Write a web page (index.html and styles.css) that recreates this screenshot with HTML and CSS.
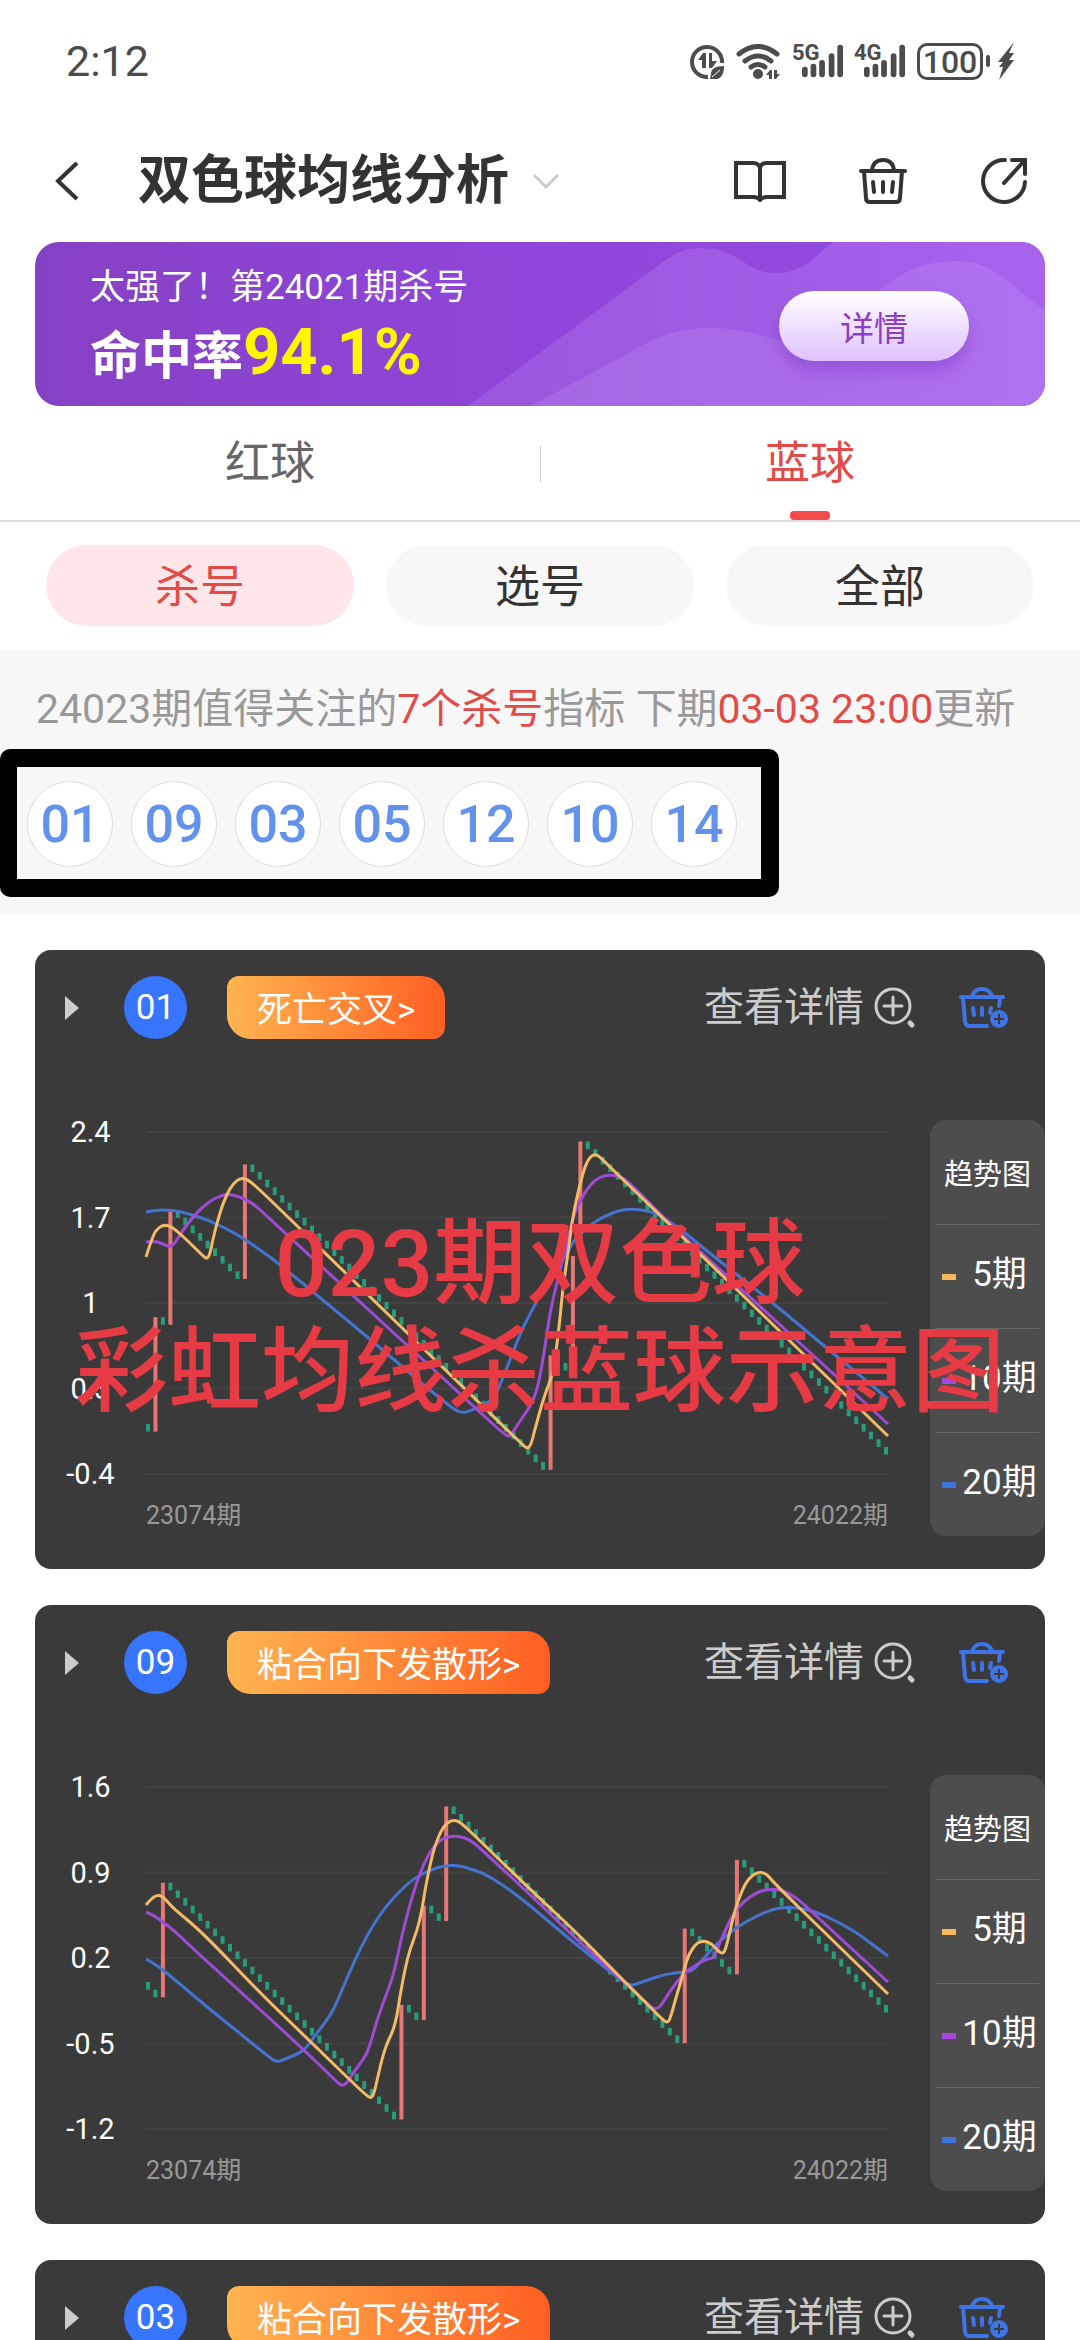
FILE: index.html
```html
<!DOCTYPE html>
<html lang="zh-CN">
<head>
  <meta charset="UTF-8" />
  <meta name="viewport" content="width=device-width, initial-scale=1.0"/>
  <title>双色球均线分析</title>
  <link rel="stylesheet" href="styles.css">
</head>
<body>

  <!-- Shared icons -->
  <svg class="sprite" aria-hidden="true">
    <symbol id="icon-basket" viewBox="0 0 50 48">
      <g fill="none" stroke="currentColor" stroke-width="4" stroke-linecap="round" stroke-linejoin="round">
        <path d="M14 13C15 6 19 3 25 3s10 3 11 10"/>
        <path d="M3 14h44"/>
        <path d="M6 14l2 27q0 4 4 4h26q4 0 4-4l2-27"/>
        <path d="M15 25l1 10M25 25v10M35 25l-1 10"/>
      </g>
    </symbol>
    <symbol id="icon-add" viewBox="0 0 50 43">
      <g fill="none" stroke="currentColor" stroke-width="4" stroke-linecap="round" stroke-linejoin="round">
        <path d="M13 10C15 5 18 3 23 3s8 2 10 7"/>
        <path d="M2 11h42"/>
        <path d="M4 11l2 25q1 4 4 4h18"/>
        <path d="M41 12l-1 8"/>
        <path d="M14 22l1 7M23 22v7M32 22l-1 5"/>
      </g>
      <circle cx="40" cy="33" r="9" fill="currentColor"/>
      <path d="M40 28v10M35 33h10" stroke="#3a3a3a" stroke-width="2"/>
    </symbol>
    <symbol id="icon-zoom" viewBox="0 0 42 42">
      <g fill="none" stroke="currentColor" stroke-width="3" stroke-linecap="round">
        <circle cx="19" cy="19" r="17"/>
        <path d="M19 10v18M10 19h18"/>
        <path d="M36 36l2 2" stroke-width="5"/>
      </g>
    </symbol>
    <symbol id="icon-signal" viewBox="0 0 44 34">
      <path d="M3 26v5M12 23v8M21 19v12M31 12v19M40 3v28" stroke="currentColor" stroke-width="6" stroke-linecap="round"/>
    </symbol>
    <symbol id="icon-play" viewBox="0 0 14 24">
      <path d="M0 0l14 12L0 24z" fill="currentColor"/>
    </symbol>
  </svg>

  <!-- Status bar -->
  <div class="status">
    <span class="time">2:12</span>
    <div class="status-icons">
      <svg width="34" height="35" viewBox="0 0 34 35">
        <path d="M18 33A15 15 0 1 1 32 19" fill="none" stroke="currentColor" stroke-width="4"/>
        <path d="M8 16l5-7h3v15h-4v-8zM19 9h3v8h5l-5 7h-3z" fill="currentColor"/>
        <path d="M34 22c-9 0-13 3-13 8l-1 5h7c5-1 7-6 7-13z" fill="currentColor"/>
        <path d="M22 33l8-7" stroke="#fff" stroke-width="1"/>
      </svg>
      <svg class="wifi" width="44" height="35" viewBox="0 0 44 35">
        <g fill="none" stroke="currentColor" stroke-width="5" stroke-linecap="round">
          <path d="M3 10q19-15 38 0"/>
          <path d="M9 17q13-10 26 0"/>
          <path d="M15 23q7-5 14 0"/>
        </g>
        <circle cx="22" cy="30" r="5" fill="currentColor"/>
        <path d="M30 31l4-5h2v9h-3v-4zM38 26h3v4h3l-4 5h-2z" fill="currentColor"/>
      </svg>
      <span class="signal"><b>5G</b><svg width="44" height="34"><use href="#icon-signal"/></svg></span>
      <span class="signal"><b>4G</b><svg width="44" height="34"><use href="#icon-signal"/></svg></span>
      <span class="battery">100</span>
      <span class="battery-tip"></span>
      <svg class="bolt" width="16" height="38" viewBox="0 0 16 38">
        <path d="M16 0L0 20h5l-4 5h4L1 38l15-20h-5l5-7h-5z" fill="currentColor"/>
      </svg>
    </div>
  </div>

  <!-- Title bar -->
  <header class="topbar">
    <button class="icon-btn" aria-label="返回">
      <svg width="24" height="40" viewBox="0 0 24 40"><path d="M22 2L3 20l19 18" fill="none" stroke="currentColor" stroke-width="4"/></svg>
    </button>
    <h1>双色球均线分析</h1>
    <button class="icon-btn more" aria-label="切换">
      <svg width="26" height="16" viewBox="0 0 26 16"><path d="M1 2l12 12L25 2" fill="none" stroke="currentColor" stroke-width="3"/></svg>
    </button>
    <div class="actions">
      <button class="icon-btn" aria-label="说明">
        <svg width="52" height="42" viewBox="0 0 52 42">
          <path d="M2 3h17q6 0 7 5q1-5 7-5h17v34H33q-5 0-7 3q-2-3-7-3H2zM26 8v31" fill="none" stroke="currentColor" stroke-width="4"/>
        </svg>
      </button>
      <button class="icon-btn" aria-label="号码篮"><svg width="50" height="48"><use href="#icon-basket"/></svg></button>
      <button class="icon-btn" aria-label="分享">
        <svg width="48" height="48" viewBox="0 0 48 48">
          <path d="M25 3A21 21 0 1 0 45 25M32 3h13v14M45 3L24 26" fill="none" stroke="currentColor" stroke-width="4" stroke-linecap="round"/>
        </svg>
      </button>
    </div>
  </header>

  <!-- Banner -->
  <section class="banner">
    <svg class="waves" viewBox="0 0 1010 164" preserveAspectRatio="none">
      <defs>
        <linearGradient id="wave-back">
          <stop offset="0" stop-color="#9a56dc"/>
          <stop offset="1" stop-color="#a763ec"/>
        </linearGradient>
        <linearGradient id="wave-front">
          <stop offset="0" stop-color="#a566e2"/>
          <stop offset="1" stop-color="#b071f0"/>
        </linearGradient>
      </defs>
      <path d="M433 164L625 22C645 8 652 6 665 6C705 6 709 31 741 31C767 31 777 17 798 0H1010V164z" fill="url(#wave-back)"/>
      <path d="M496 164L610 102C637 88 655 86 677 86C705 86 722 93 750 100C820 110 830 19 922 19C960 19 975 45 1010 68V164z" fill="url(#wave-front)"/>
    </svg>
    <div class="banner-text">
      <p>太强了！第24021期杀号</p>
      <strong>命中率<em>94.1%</em></strong>
    </div>
    <button class="detail-btn">详情</button>
  </section>

  <!-- Tabs -->
  <nav class="tabs">
    <a href="#red">红球</a>
    <a href="#blue" class="active">蓝球</a>
  </nav>

  <div class="filters">
    <button class="active">杀号</button>
    <button>选号</button>
    <button>全部</button>
  </div>

  <!-- Recommended numbers -->
  <section class="summary">
    <p>24023期值得关注的<em>7个杀号</em>指标 下期<em>03-03 23:00</em>更新</p>
    <div class="balls">
      <span>01</span>
      <span>09</span>
      <span>03</span>
      <span>05</span>
      <span>12</span>
      <span>10</span>
      <span>14</span>
    </div>
  </section>

  <main class="list">

    <article class="card">
      <div class="card-head">
        <button class="icon-btn" aria-label="展开"><svg width="14" height="24"><use href="#icon-play"/></svg></button>
        <span class="num">01</span>
        <button class="tag">死亡交叉&gt;</button>
        <a class="more-link" href="#detail-01">查看详情<svg width="42" height="42"><use href="#icon-zoom"/></svg></a>
        <button class="icon-btn add" aria-label="加入号码篮"><svg width="50" height="43"><use href="#icon-add"/></svg></button>
      </div>
      <div class="card-body">
        <div class="axis"><span>2.4</span><span>1.7</span><span>1</span><span>0.3</span><span>-0.4</span></div>
        <div class="plot">
          <svg class="chart" data-chart="01" viewBox="0 0 742 342" preserveAspectRatio="none"></svg>
          <div class="dates"><span>23074期</span><span>24022期</span></div>
        </div>
        <div class="legend">
          <div>趋势图</div>
          <div class="ma5"><span>5期</span></div>
          <div class="ma10"><span>10期</span></div>
          <div class="ma20"><span>20期</span></div>
        </div>
      </div>
      <p class="caption">023期双色球<br>彩虹均线杀蓝球示意图</p>
    </article>

    <article class="card">
      <div class="card-head">
        <button class="icon-btn" aria-label="展开"><svg width="14" height="24"><use href="#icon-play"/></svg></button>
        <span class="num">09</span>
        <button class="tag">粘合向下发散形&gt;</button>
        <a class="more-link" href="#detail-09">查看详情<svg width="42" height="42"><use href="#icon-zoom"/></svg></a>
        <button class="icon-btn add" aria-label="加入号码篮"><svg width="50" height="43"><use href="#icon-add"/></svg></button>
      </div>
      <div class="card-body">
        <div class="axis"><span>1.6</span><span>0.9</span><span>0.2</span><span>-0.5</span><span>-1.2</span></div>
        <div class="plot">
          <svg class="chart" data-chart="09" viewBox="0 0 742 342" preserveAspectRatio="none"></svg>
          <div class="dates"><span>23074期</span><span>24022期</span></div>
        </div>
        <div class="legend">
          <div>趋势图</div>
          <div class="ma5"><span>5期</span></div>
          <div class="ma10"><span>10期</span></div>
          <div class="ma20"><span>20期</span></div>
        </div>
      </div>
    </article>

    <article class="card">
      <div class="card-head">
        <button class="icon-btn" aria-label="展开"><svg width="14" height="24"><use href="#icon-play"/></svg></button>
        <span class="num">03</span>
        <button class="tag">粘合向下发散形&gt;</button>
        <a class="more-link" href="#detail-03">查看详情<svg width="42" height="42"><use href="#icon-zoom"/></svg></a>
        <button class="icon-btn add" aria-label="加入号码篮"><svg width="50" height="43"><use href="#icon-add"/></svg></button>
      </div>
    </article>

  </main>

  <script src="script.js"></script>
</body>
</html>
```

FILE: styles.css
```css
* {
  box-sizing: border-box;
}

body {
  margin: 0;
  height: 100vh;
  display: flex;
  flex-direction: column;
  overflow: hidden;
  background: #fff;
  color: #333;
  font-family: Roboto, "Noto Sans CJK SC", sans-serif;
}

h1, p {
  margin: 0;
}

button {
  font-family: inherit;
  border: none;
  padding: 0;
  background: none;
  color: inherit;
  cursor: pointer;
}

a {
  color: inherit;
  text-decoration: none;
}

em {
  font-style: normal;
}

svg {
  display: block;
}

.sprite {
  position: absolute;
  width: 0;
  height: 0;
}

.icon-btn {
  display: flex;
}

/* Status bar */
.status {
  display: flex;
  justify-content: space-between;
  align-items: center;
  height: 122px;
  padding: 0 66px;
  color: #4c4c4c;
  flex-shrink: 0;
}

.time {
  font-size: 43px;
}

.status-icons {
  display: flex;
  align-items: center;
}

.wifi {
  margin-left: 12px;
}

.signal {
  position: relative;
  padding-left: 10px;
  margin-left: 10px;
}

.wifi + .signal {
  margin-left: 12px;
}

.signal b {
  position: absolute;
  left: 0;
  top: 0;
  font-size: 22px;
  line-height: 18px;
  font-weight: 700;
}

.signal svg {
  width: 42px;
}

.battery {
  width: 66px;
  height: 37px;
  margin-left: 11px;
  border: 3px solid #4c4c4c;
  border-radius: 10px;
  font-size: 32px;
  line-height: 32px;
  font-weight: 500;
  text-align: center;
}

.battery-tip {
  width: 4px;
  height: 12px;
  margin: 0 8px 0 3px;
  border-radius: 2px;
  background: #4c4c4c;
}

/* Title bar */
.topbar {
  display: flex;
  align-items: center;
  height: 120px;
  padding: 0 52px 2px 55px;
  flex-shrink: 0;
}

.topbar h1 {
  margin-left: 59px;
  font-size: 53px;
  line-height: 70px;
  font-weight: bold;
}

.more {
  margin-left: 24px;
  color: #ccc;
}

.actions {
  display: flex;
  align-items: center;
  gap: 72px;
  margin-left: auto;
}

/* Banner */
.banner {
  position: relative;
  display: flex;
  justify-content: space-between;
  align-items: center;
  height: 164px;
  margin: 0 35px;
  padding: 0 76px 0 55px;
  border-radius: 24px;
  overflow: hidden;
  background: linear-gradient(to right, #8541c4, #9046da 50%, #944ce0);
  color: #fff;
  flex-shrink: 0;
}

.waves {
  position: absolute;
  inset: 0;
  width: 100%;
  height: 100%;
}

.banner-text {
  position: relative;
}

.banner-text p {
  font-size: 35px;
  line-height: 60px;
}

.banner-text strong {
  display: block;
  font-size: 51px;
  line-height: 68px;
}

.banner-text em {
  font-size: 65px;
  line-height: 68px;
  color: #fff600;
}

.detail-btn {
  position: relative;
  width: 190px;
  height: 70px;
  margin-top: 4px;
  border-radius: 35px;
  background: linear-gradient(#fff, #dfc2ff);
  box-shadow: 0 10px 16px rgba(110, 40, 180, 0.35);
  color: #8a3fc4;
  font-size: 34px;
}

/* Tabs */
.tabs {
  display: flex;
  height: 116px;
  border-bottom: 2px solid #ddd;
  flex-shrink: 0;
}

.tabs a {
  position: relative;
  flex: 1;
  text-align: center;
  font-size: 45px;
  line-height: 116px;
  color: #666;
}

.tabs a + a::before {
  content: "";
  position: absolute;
  left: 0;
  top: 40px;
  width: 1px;
  height: 36px;
  background: #ccc;
}

.tabs .active {
  color: #e24b48;
}

.tabs .active::after {
  content: "";
  position: absolute;
  left: calc(50% - 20px);
  bottom: 0;
  width: 40px;
  height: 9px;
  border-radius: 4px;
  background: #f54b4b;
}

.filters {
  display: flex;
  gap: 32px;
  padding: 23px 46px;
  flex-shrink: 0;
}

.filters button {
  flex: 1;
  height: 81px;
  padding-bottom: 4px;
  border-radius: 41px;
  background: #f7f7f7;
  font-size: 45px;
}

.filters .active {
  background: #ffe7e9;
  color: #e24b48;
}

/* Recommended numbers */
.summary {
  padding: 30px 0 17px;
  background: #f7f7f7;
  flex-shrink: 0;
}

.summary p {
  padding-left: 36px;
  font-size: 41px;
  line-height: 60px;
  color: #999;
  white-space: nowrap;
}

.summary em {
  color: #e24b48;
}

.balls {
  display: inline-flex;
  gap: 18px;
  margin-top: 10px;
  padding: 14px 24px 12px 10px;
  border: 18px solid #000;
  border-left-width: 17px;
  border-radius: 10px;
  vertical-align: top;
}

.balls span {
  width: 86px;
  height: 86px;
  border: 1px solid #ddd;
  border-radius: 50%;
  background: #fff;
  color: #6292ec;
  font-size: 52px;
  line-height: 86px;
  font-weight: 500;
  text-align: center;
}

/* Chart cards */
.list {
  flex: 1;
  min-height: 0;
  padding: 36px 35px;
  overflow: hidden;
}

.card {
  position: relative;
  min-height: 618px;
  margin-bottom: 36px;
  padding-bottom: 33px;
  border-radius: 16px;
  background: #3a3a3a;
  color: #fff;
}

.card-head {
  display: flex;
  align-items: center;
  padding: 26px 36px 0 30px;
  color: #ccc;
}

.num {
  width: 63px;
  height: 63px;
  margin-left: 45px;
  border-radius: 50%;
  background: #3875ff;
  color: #fff;
  font-size: 35px;
  line-height: 63px;
  text-align: center;
}

.tag {
  height: 63px;
  margin-left: 40px;
  padding: 0 30px 2px;
  border-radius: 12px 24px 12px 24px;
  background: linear-gradient(to right, #ffb450, #ff5f22);
  color: #fff;
  font-size: 35px;
}

.more-link {
  display: flex;
  align-items: center;
  gap: 10px;
  margin-left: auto;
  font-size: 40px;
  line-height: 63px;
}

.add {
  margin-left: 43px;
  color: #3f74e6;
}

.card-body {
  display: flex;
  align-items: flex-start;
  margin-top: 79px;
}

.axis {
  display: flex;
  flex-direction: column;
  justify-content: space-between;
  align-items: center;
  width: 111px;
  height: 370px;
  font-size: 29px;
  line-height: 28px;
}

.plot {
  flex: 1;
  min-width: 0;
  padding-top: 14px;
}

.chart {
  width: 100%;
  height: 342px;
  overflow: visible;
}

.dates {
  display: flex;
  justify-content: space-between;
  margin-top: 24px;
  font-size: 25px;
  line-height: 36px;
  color: #999;
}

.legend {
  width: 115px;
  margin: 2px 0 0 42px;
  padding: 0 6px;
  border-radius: 16px;
  background: #4d4d4d;
}

.legend div {
  display: flex;
  align-items: center;
  justify-content: center;
  height: 104px;
  font-size: 29px;
}

.legend div + div {
  border-top: 1px solid #686868;
  justify-content: flex-start;
}

.legend div + div::before {
  content: "";
  width: 14px;
  height: 6px;
  margin-left: 6px;
  background: currentColor;
}

.legend span {
  flex: 1;
  padding-left: 4px;
  font-size: 35px;
  line-height: 50px;
  padding-bottom: 3px;
  text-align: center;
  color: #fff;
}

.ma5 {
  color: #f8b75c;
}

.ma10 {
  color: #a548e0;
}

.ma20 {
  color: #3f74e0;
}

.caption {
  position: absolute;
  left: 0;
  right: 0;
  top: 261px;
  font-size: 93px;
  line-height: 108px;
  font-weight: 500;
  color: #e63a44;
  text-align: center;
  white-space: nowrap;
}

/* Chart strokes */
.grid-line {
  stroke: #434343;
  stroke-width: 2;
}

.bar-up {
  fill: #e57874;
}

.bar-down {
  fill: #279d7c;
}

.line {
  fill: none;
  stroke-width: 3;
}

.line-ma5 {
  stroke: #f3bb66;
}

.line-ma10 {
  stroke: #a04bd6;
}

.line-ma20 {
  stroke: #4474d0;
}
```

FILE: script.js
```js
// start: top of the first bar, hits: draws in which the number came up
const charts = {
  '01': {
    start: 292,
    hits: [1, 3, 13, 54, 57, 58],
    ma5: '0,125 7,103 12,96 18,93 24,94 31,99 44,111 57,124 61,127 64,122 67,107 71,91 77,71 84,56 91,48 97,46 104,49 117,61 140,83 360,297 374,310 381,317 385,313 389,297 394,279 399,262 406,244 409,228 414,187 417,154 422,122 426,89 432,60 439,34 444,25 449,22 454,25 466,37 490,60 742,304',
    ma10: '0,110 9,109 17,112 24,115 29,111 37,98 51,80 64,69 74,64 82,62 91,64 101,68 111,75 124,87 340,286 357,301 363,305 367,300 374,289 381,279 387,269 392,254 397,228 403,187 407,167 414,138 421,111 426,89 432,73 441,57 449,48 457,44 465,43 474,44 481,49 494,61 517,85 560,125 742,292',
    ma20: '0,80 11,78 21,78 31,79 47,83 64,89 81,97 97,106 114,118 131,130 231,213 267,244 307,277 316,281 324,279 344,270 350,262 357,246 367,220 377,195 391,169 404,144 421,122 427,109 444,93 457,85 474,78 487,77 504,79 517,85 541,102 557,116 627,171 677,213 711,241 742,267'
  },
  '09': {
    start: 195,
    hits: [2, 34, 37, 40, 72, 79],
    ma5: '0,118 5,112 11,108 16,109 21,114 27,121 57,146 114,206 167,257 204,293 221,309 225,311 228,307 232,289 237,268 242,254 247,244 251,229 254,209 259,182 264,162 271,144 276,123 279,103 284,78 289,58 296,42 302,35 308,33 314,35 327,47 394,112 427,142 471,187 507,223 517,233 522,236 525,229 531,207 536,191 541,172 546,162 552,155 559,154 566,157 572,164 577,167 580,161 584,144 589,123 594,109 599,97 606,88 614,85 621,87 627,95 677,144 742,207',
    ma10: '0,125 7,128 17,135 31,146 44,159 97,207 157,262 191,295 196,299 201,296 207,286 217,273 223,262 232,229 246,193 251,172 256,148 264,117 272,91 281,70 289,58 297,51 307,49 316,50 324,53 334,61 394,117 427,149 471,189 484,200 506,221 510,222 515,219 524,204 537,187 551,177 561,172 568,171 572,160 579,144 587,127 597,115 611,105 624,102 636,103 651,111 664,123 694,151 742,195',
    ma20: '0,172 11,178 34,197 61,220 91,244 124,271 131,275 137,273 154,266 161,260 171,246 184,229 191,215 201,191 214,162 227,138 241,118 254,104 267,92 284,83 297,79 312,78 324,82 337,86 357,98 377,113 394,127 427,155 461,182 483,199 491,197 504,192 521,187 537,185 546,184 552,178 564,164 577,151 594,138 611,129 627,122 641,120 661,122 677,128 694,136 714,148 727,158 742,169'
  }
};

const WIDTH = 742;
const HEIGHT = 342;
const COUNT = 100;
const STEP = HEIGHT / 2.8 / 16; // one miss lowers the value by 1/16

function add(svg, tag, attrs) {
  const el = document.createElementNS('http://www.w3.org/2000/svg', tag);
  for (const key in attrs) el.setAttribute(key, attrs[key]);
  svg.appendChild(el);
}

// round the corners of a point list
function smooth(list) {
  const p = list.split(' ').map(s => s.split(',').map(Number));
  let d = 'M' + p[0];
  for (let i = 1; i < p.length - 1; i++) {
    const mid = [(p[i][0] + p[i + 1][0]) / 2, (p[i][1] + p[i + 1][1]) / 2];
    d += 'Q' + p[i] + ' ' + mid;
  }
  return d + 'L' + p[p.length - 1];
}

document.querySelectorAll('.chart').forEach(svg => {
  const data = charts[svg.dataset.chart];

  for (let i = 0; i < 5; i++) {
    const y = i * HEIGHT / 4;
    add(svg, 'line', { class: 'grid-line', x1: 0, x2: WIDTH, y1: y, y2: y });
  }

  let y = data.start;
  for (let i = 0; i < COUNT; i++) {
    const x = i * (WIDTH - 4) / (COUNT - 1);
    if (data.hits.includes(i)) {
      y -= STEP * 15;
      add(svg, 'rect', { class: 'bar-up', x: x, y: y, width: 4, height: STEP * 15 });
    } else {
      add(svg, 'rect', { class: 'bar-down', x: x, y: y, width: 4, height: STEP });
      y += STEP;
    }
  }

  ['ma20', 'ma10', 'ma5'].forEach(name => {
    add(svg, 'path', { class: 'line line-' + name, d: smooth(data[name]) });
  });
});
```
